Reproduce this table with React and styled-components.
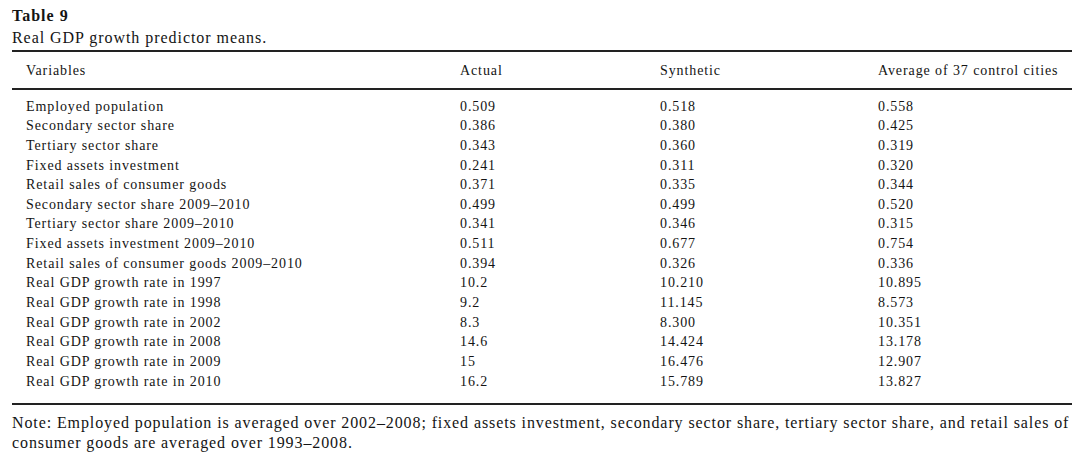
import React from 'react'
import styled, { createGlobalStyle } from 'styled-components'

const GlobalStyle = createGlobalStyle`
  html, body {
    margin: 0;
    padding: 0;
    background: #ffffff;
  }
  body {
    font-family: "Liberation Serif", "Times New Roman", serif;
    color: #141414;
  }
`

const Page = styled.div`
  width: 1060px;
  padding: 6px 8px 0 12px;
`

const Caption = styled.div`
  font-size: 16px;
  line-height: 20px;
  letter-spacing: 0.95px;
`

const Label = styled.div`
  font-weight: bold;
  letter-spacing: 1px;
`

const Subtitle = styled.div`
  margin-top: 2px;
`

const Table = styled.div`
  margin-top: 2px;
  border-top: 2px solid #222;
  border-bottom: 2px solid #222;
`

const Row = styled.div`
  display: grid;
  grid-template-columns: 434px 200px 218px 1fr;
  padding-left: 14px;
  font-size: 14px;
  letter-spacing: 0.9px;
  line-height: 19.64px;
`

const HeadRow = styled(Row)`
  padding-top: 9px;
  padding-bottom: 7px;
  border-bottom: 2px solid #222;
`

const Body = styled.div`
  padding-top: 7px;
  padding-bottom: 12px;
`

const Cell = styled.div`
  white-space: nowrap;
`

const Note = styled.div`
  margin-top: 8px;
  font-size: 16px;
  line-height: 20px;
  letter-spacing: 0.9px;
`

const rows = [
  ['Employed population', '0.509', '0.518', '0.558'],
  ['Secondary sector share', '0.386', '0.380', '0.425'],
  ['Tertiary sector share', '0.343', '0.360', '0.319'],
  ['Fixed assets investment', '0.241', '0.311', '0.320'],
  ['Retail sales of consumer goods', '0.371', '0.335', '0.344'],
  ['Secondary sector share 2009–2010', '0.499', '0.499', '0.520'],
  ['Tertiary sector share 2009–2010', '0.341', '0.346', '0.315'],
  ['Fixed assets investment 2009–2010', '0.511', '0.677', '0.754'],
  ['Retail sales of consumer goods 2009–2010', '0.394', '0.326', '0.336'],
  ['Real GDP growth rate in 1997', '10.2', '10.210', '10.895'],
  ['Real GDP growth rate in 1998', '9.2', '11.145', '8.573'],
  ['Real GDP growth rate in 2002', '8.3', '8.300', '10.351'],
  ['Real GDP growth rate in 2008', '14.6', '14.424', '13.178'],
  ['Real GDP growth rate in 2009', '15', '16.476', '12.907'],
  ['Real GDP growth rate in 2010', '16.2', '15.789', '13.827'],
]

export default function App() {
  return (
    <Page>
      <GlobalStyle />
      <Caption>
        <Label>Table 9</Label>
        <Subtitle>Real GDP growth predictor means.</Subtitle>
      </Caption>
      <Table>
        <HeadRow>
          <Cell>Variables</Cell>
          <Cell>Actual</Cell>
          <Cell>Synthetic</Cell>
          <Cell>Average of 37 control cities</Cell>
        </HeadRow>
        <Body>
          {rows.map(r => (
            <Row key={r[0]}>
              {r.map((c, i) => <Cell key={i}>{c}</Cell>)}
            </Row>
          ))}
        </Body>
      </Table>
      <Note>
        Note: Employed population is averaged over 2002–2008; fixed assets investment, secondary sector share, tertiary sector share, and retail sales of consumer goods are averaged over 1993–2008.
      </Note>
    </Page>
  )
}
